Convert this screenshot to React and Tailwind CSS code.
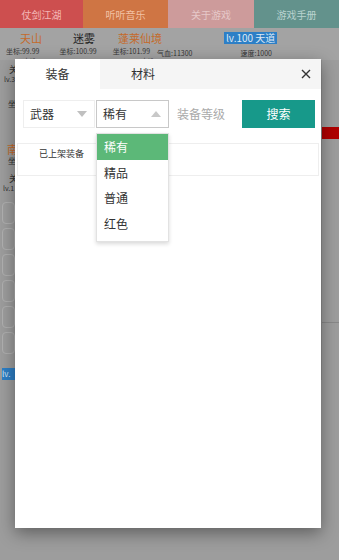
import React from "react";

const font = { fontFamily: '"Noto Sans CJK SC", "Noto Sans", sans-serif' };

function Caret({ up, className }) {
  return (
    <svg width="10" height="6" viewBox="0 0 10 6" className={className}>
      {up ? <path d="M0 6 L5 0 L10 6 Z" fill="currentColor" /> : <path d="M0 0 L10 0 L5 6 Z" fill="currentColor" />}
    </svg>
  );
}

function Backdrop() {
  return (
    <div className="w-[339px] h-[560px] bg-[#9d9d9d] overflow-hidden">
      <div className="flex h-[28px] text-[10px]">
        <div className="w-[83px] bg-[#cd4f4f] text-[#f3b6b6] flex items-center justify-center">仗剑江湖</div>
        <div className="w-[85px] bg-[#cf7544] text-[#f2c2a4] flex items-center justify-center">听听音乐</div>
        <div className="w-[86px] bg-[#cd9b9b] text-[#e6c9c9] flex items-center justify-center">关于游戏</div>
        <div className="w-[85px] bg-[#63928c] text-[#b9d3cf] flex items-center justify-center">游戏手册</div>
      </div>
      <div className="bg-[#a3a3a3] h-[32px]">
        <div className="flex items-end pt-[2px] h-[16px] text-[11px] leading-none">
          <span className="ml-[20px] text-[#c56a2a]">天山</span>
          <span className="ml-[31px] text-[#222]">迷雾</span>
          <span className="ml-[23px] text-[#c56a2a]">蓬莱仙境</span>
          <span className="ml-[62px] bg-[#2d7fc6] text-[#dde9f5] text-[10px] px-[2px] py-[1px]">lv.100 天道</span>
        </div>
        <div className="flex items-center text-[7px] text-[#333] leading-none mt-[2px]">
          <span className="ml-[6px]">坐标:99.99</span>
          <span className="ml-[20px]">坐标:100.99</span>
          <span className="ml-[16px]">坐标:101.99</span>
          <span className="ml-[7px] mt-[4px]">气血:11300</span>
          <span className="ml-[48px] mt-[4px]">速度:1000</span>
        </div>
        <div className="flex text-[7px] text-[#444] leading-none mt-[1px]">
          <span className="ml-[23px]">未选</span>
          <span className="ml-[104px]">未选</span>
        </div>
      </div>
      <div className="flex">
        <div className="w-[15px] overflow-hidden whitespace-nowrap flex flex-col text-[7px] text-[#333] leading-none">
          <span className="mt-[5px] ml-[9px] text-[9px]">关</span>
          <span className="ml-[4px] mt-[2px]">lv.3</span>
          <span className="mt-[17px] ml-[8px] text-[8px]">坐</span>
          <span className="mt-[36px] ml-[7px] text-[11px] text-[#c56a2a]">南</span>
          <span className="mt-[2px] ml-[8px] text-[8px]">坐</span>
          <span className="mt-[9px] ml-[9px] text-[9px]">关</span>
          <span className="ml-[3px] mt-[2px]">lv.1</span>
          <div className="mt-[10px] flex flex-col gap-[4px] ml-[2px]">
            <div className="h-[22px] border border-[#b0b0b0] rounded-sm" />
            <div className="h-[22px] border border-[#b0b0b0] rounded-sm" />
            <div className="h-[22px] border border-[#b0b0b0] rounded-sm" />
            <div className="h-[22px] border border-[#b0b0b0] rounded-sm" />
            <div className="h-[22px] border border-[#b0b0b0] rounded-sm" />
            <div className="h-[22px] border border-[#b0b0b0] rounded-sm" />
          </div>
          <span className="mt-[14px] ml-[2px] w-[13px] h-[12px] bg-[#2d7fc6] text-[#dde9f5] text-[8px] flex items-center">lv.</span>
        </div>
        <div className="flex-1" />
        <div className="w-[18px] flex flex-col border-l border-[#8f8f8f]">
          <div className="mt-[67px] h-[12px] bg-[#b00000]" />
          <div className="mt-[183px] h-px bg-[#888]" />
        </div>
      </div>
    </div>
  );
}

export default function App() {
  return (
    <div className="relative w-[339px] h-[560px] overflow-hidden" style={font}>
      <Backdrop />
      <div className="absolute left-[15px] top-[59px] w-[306px] h-[469px] bg-white shadow-[0_5px_16px_rgba(0,0,0,0.4)]">
        <div className="flex h-[30px] bg-[#f5f5f5]">
          <div className="w-[85px] bg-white flex items-center justify-center text-[12px] text-[#333]">装备</div>
          <div className="w-[86px] flex items-center justify-center text-[12px] text-[#333]">材料</div>
          <div className="flex-1 flex items-center justify-end pr-[10px]">
            <svg width="10" height="10" viewBox="0 0 10 10">
              <path d="M1 1 L9 9 M9 1 L1 9" stroke="#333" strokeWidth="1.4" />
            </svg>
          </div>
        </div>
        <div className="flex mt-[11px] ml-[8px] h-[28px] text-[12px]">
          <div className="w-[72px] border border-[#eeeeee] flex items-center justify-between pl-[6px] pr-[7px] text-[#333]">
            <span>武器</span>
            <Caret className="text-[#c0c0c0]" />
          </div>
          <div className="relative w-[73px] ml-px border border-[#c8c8c8] flex items-center justify-between pl-[6px] pr-[7px] text-[#333]">
            <span>稀有</span>
            <Caret up className="text-[#c8c8c8]" />
            <div className="absolute left-[-1px] top-[32px] w-[73px] bg-white border border-[#e2e2e2] shadow-[0_2px_4px_rgba(0,0,0,0.15)] pb-[5px] z-10">
              <div className="h-[26px] bg-[#5cb878] text-white flex items-center pl-[7px]">稀有</div>
              <div className="h-[25px] flex items-center pl-[7px] text-[#333]">精品</div>
              <div className="h-[26px] flex items-center pl-[7px] text-[#333]">普通</div>
              <div className="h-[25px] flex items-center pl-[7px] text-[#333]">红色</div>
            </div>
          </div>
          <div className="w-[71px] ml-[2px] flex items-center pl-[6px] text-[#aaaaaa]">装备等级</div>
          <div className="w-[73px] bg-[#17998a] text-white flex items-center justify-center">搜索</div>
        </div>
        <div className="relative mt-[10px] mx-[2px] h-[38px]">
          <div className="absolute left-0 right-0 top-[5px] bottom-0 border border-[#eeeeee]" />
          <span className="relative ml-[22px] text-[9px] text-[#333] leading-none">已上架装备</span>
        </div>
      </div>
    </div>
  );
}
